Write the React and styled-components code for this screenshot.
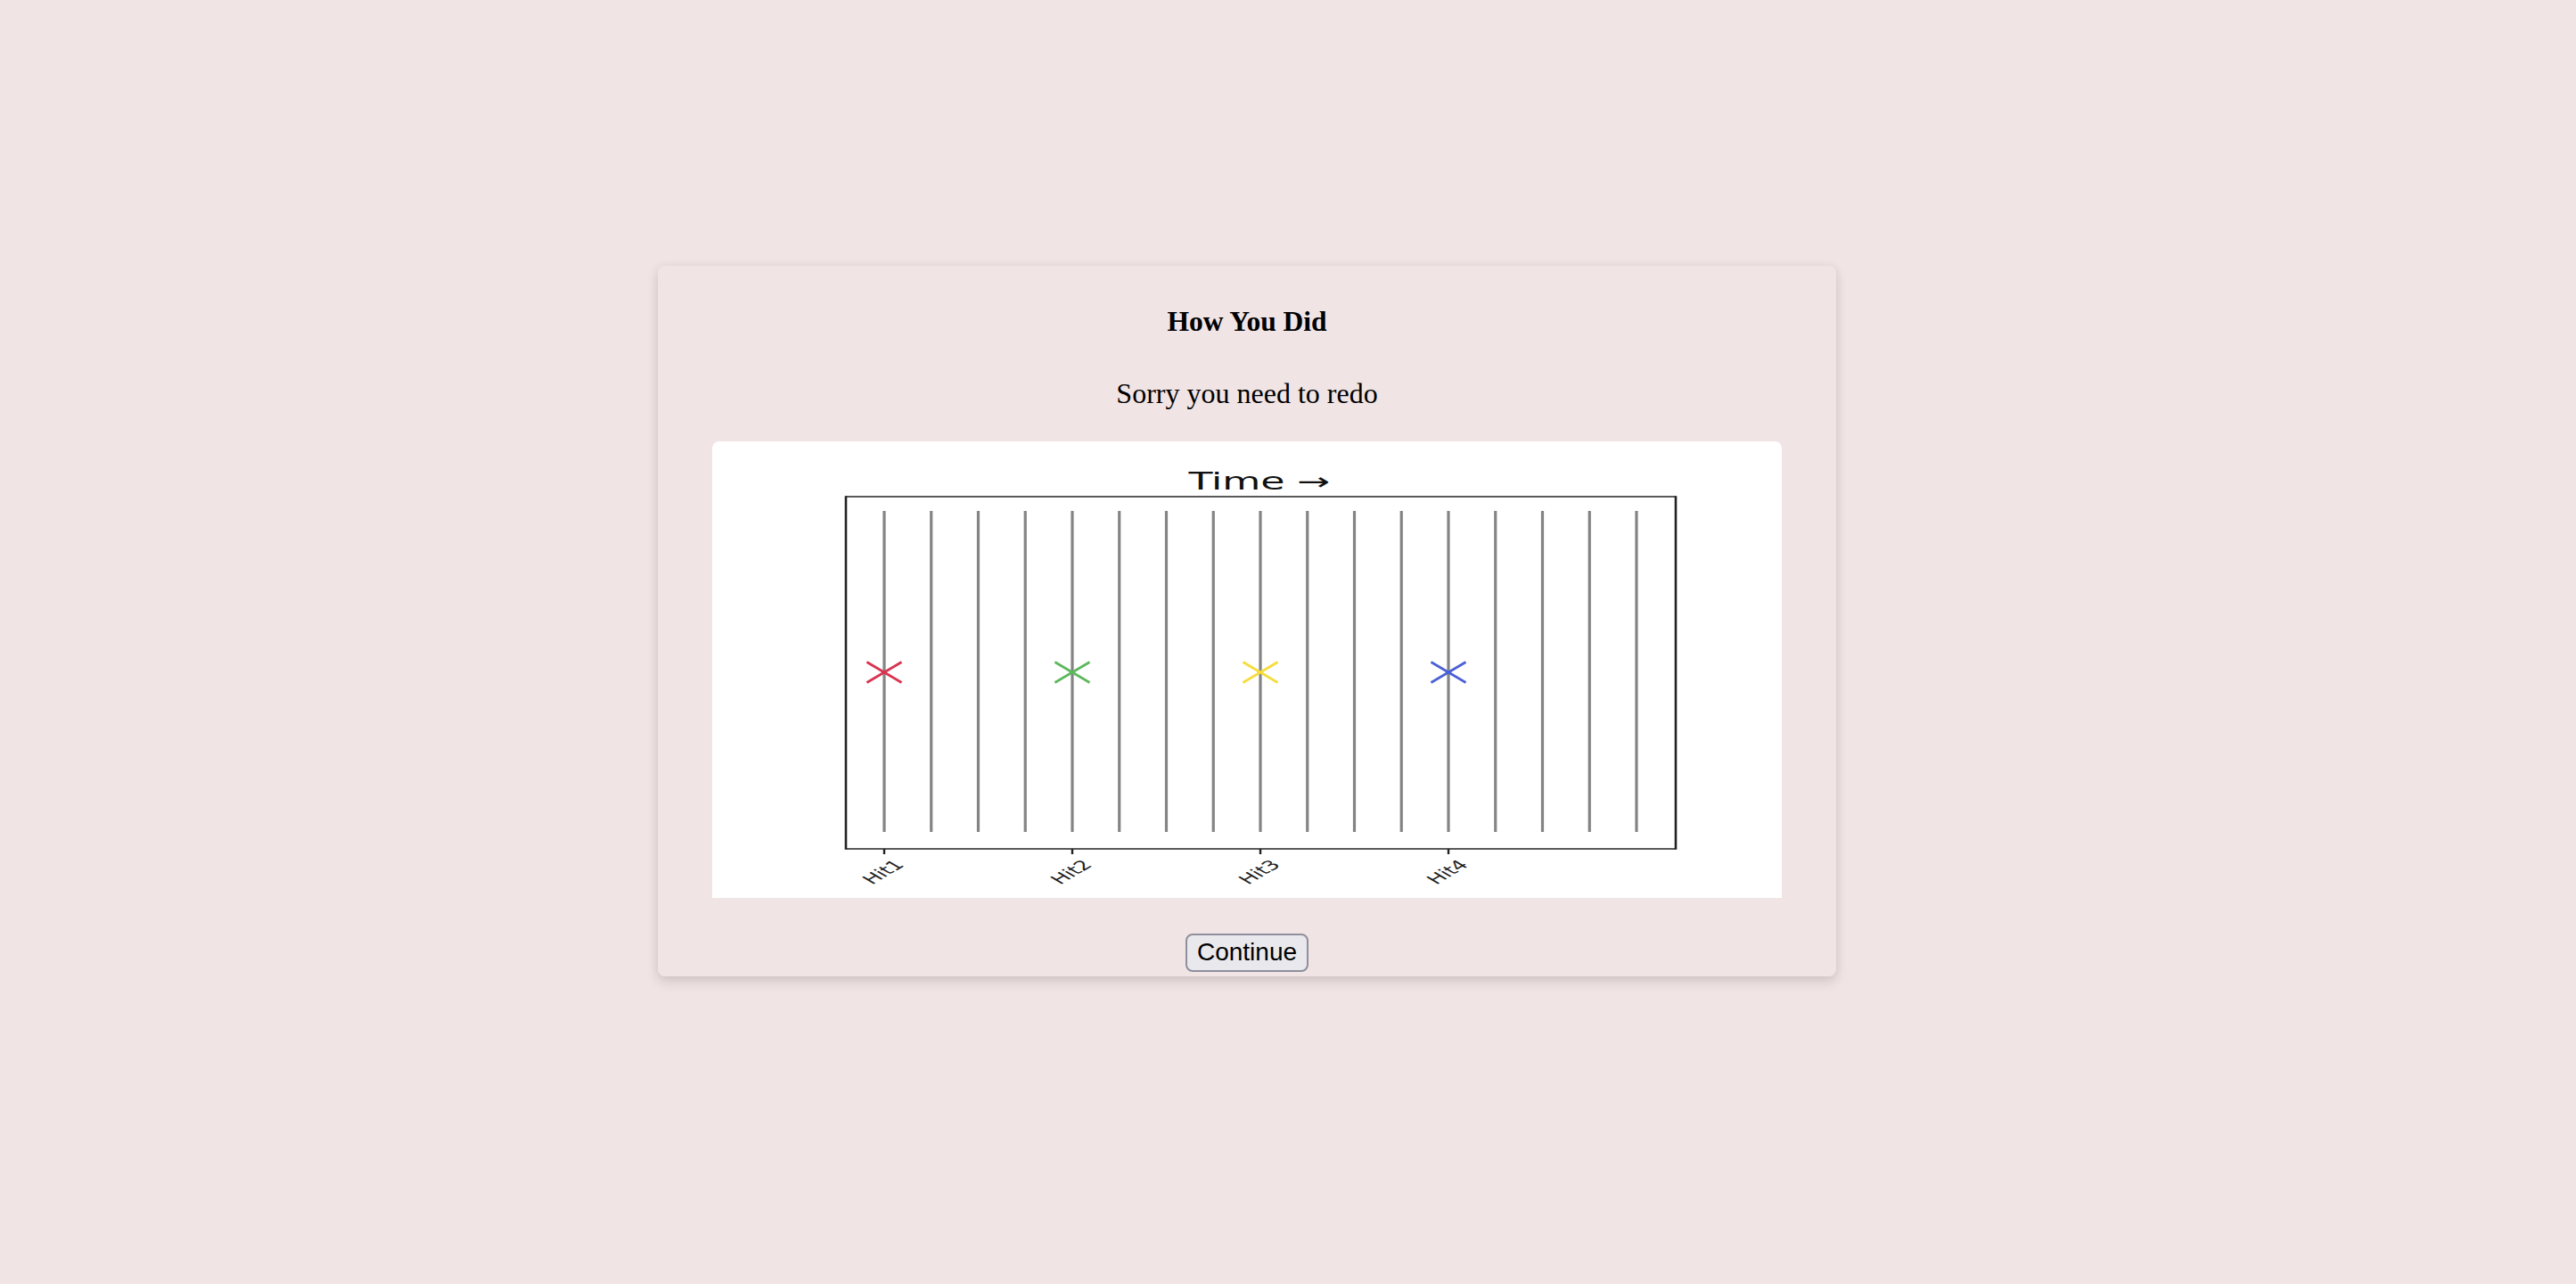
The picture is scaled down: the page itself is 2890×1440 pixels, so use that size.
import React from "react";
import styled, { createGlobalStyle } from "styled-components";

const GlobalStyle = createGlobalStyle`
  html, body {
    margin: 0;
    padding: 0;
    background: #f1e4e4;
  }
  * { box-sizing: border-box; }
`;

const Page = styled.div`
  min-height: 100vh;
  display: flex;
  align-items: center;
  justify-content: center;
  padding: 0 92px 48px 0;
  background: #f1e4e4;
`;

const Card = styled.section`
  width: 1322px;
  display: flex;
  flex-direction: column;
  align-items: center;
  padding: 44px 61px 5px 61px;
  background: #f1e4e4;
  border-radius: 8px;
  box-shadow: 0 6px 14px rgba(0, 0, 0, 0.13), 0 0 10px rgba(0, 0, 0, 0.05);
`;

const Title = styled.h2`
  margin: 0;
  font-family: "Liberation Serif", "Times New Roman", serif;
  font-weight: 700;
  font-size: 31.5px;
  line-height: 37px;
  color: #000;
`;

const Message = styled.p`
  margin: 44px 0 0 0;
  font-family: "Liberation Serif", "Times New Roman", serif;
  font-size: 32px;
  line-height: 37px;
  color: #000;
`;

const ChartPanel = styled.div`
  margin-top: 35px;
  width: 1200px;
  height: 512px;
  background: #ffffff;
  border-radius: 8px 8px 0 0;
  overflow: hidden;
`;

const ChartSvg = styled.svg`
  display: block;
  width: 100%;
  height: 100%;
`;

const ContinueButton = styled.button`
  margin-top: 40px;
  font-family: "Liberation Sans", Arial, sans-serif;
  font-size: 28px;
  line-height: 32px;
  color: #000;
  background: #e9e8ed;
  border: 2px solid #8f8f9d;
  border-radius: 8px;
  padding: 3px 11px 4px;
  cursor: pointer;
`;

const LINE_COUNT = 17;
const X0 = 193;
const STEP = 52.75;
const hits = [
  { idx: 0, color: "#d9324f", label: "Hit1" },
  { idx: 4, color: "#5cb85c", label: "Hit2" },
  { idx: 8, color: "#f6dc3a", label: "Hit3" },
  { idx: 12, color: "#4a60d6", label: "Hit4" },
];

function TimelineChart() {
  const lines = Array.from({ length: LINE_COUNT }, (_, i) => X0 + i * STEP);
  const my = 259;
  const hw = 19.5;
  const hh = 11.5;
  return (
    <ChartSvg viewBox="0 0 1200 512">
      <text
        transform="translate(614,54) scale(1.7,1)"
        textAnchor="middle"
        fontFamily="DejaVu Sans, sans-serif"
        fontSize="26"
        fill="#111"
      >
        Time →
      </text>
      {lines.map((x, i) => (
        <line key={i} x1={x} y1={78} x2={x} y2={438} stroke="#848484" strokeWidth="3.2" />
      ))}
      <line x1="150" y1="62" x2="1081" y2="62" stroke="#222" strokeWidth="1.6" />
      <line x1="150" y1="457" x2="1081" y2="457" stroke="#222" strokeWidth="1.6" />
      <line x1="150" y1="61.2" x2="150" y2="457.8" stroke="#222" strokeWidth="2.6" />
      <line x1="1081" y1="61.2" x2="1081" y2="457.8" stroke="#222" strokeWidth="2.6" />
      {hits.map((h) => {
        const x = X0 + h.idx * STEP;
        return (
          <g key={h.label}>
            <line x1={x - hw} y1={my - hh} x2={x + hw} y2={my + hh} stroke={h.color} strokeWidth="2.8" />
            <line x1={x - hw} y1={my + hh} x2={x + hw} y2={my - hh} stroke={h.color} strokeWidth="2.8" />
            <line x1={x} y1={457} x2={x} y2={463} stroke="#222" strokeWidth="2.4" />
            <text
              transform={`translate(${x - 1},483) scale(1.7,1) rotate(-45)`}
              textAnchor="middle"
              dominantBaseline="central"
              fontFamily="DejaVu Sans, sans-serif"
              fontSize="15"
              fill="#222"
            >
              {h.label}
            </text>
          </g>
        );
      })}
    </ChartSvg>
  );
}

export default function App() {
  return (
    <>
      <GlobalStyle />
      <Page>
        <Card>
          <Title>How You Did</Title>
          <Message>Sorry you need to redo</Message>
          <ChartPanel>
            <TimelineChart />
          </ChartPanel>
          <ContinueButton type="button">Continue</ContinueButton>
        </Card>
      </Page>
    </>
  );
}
